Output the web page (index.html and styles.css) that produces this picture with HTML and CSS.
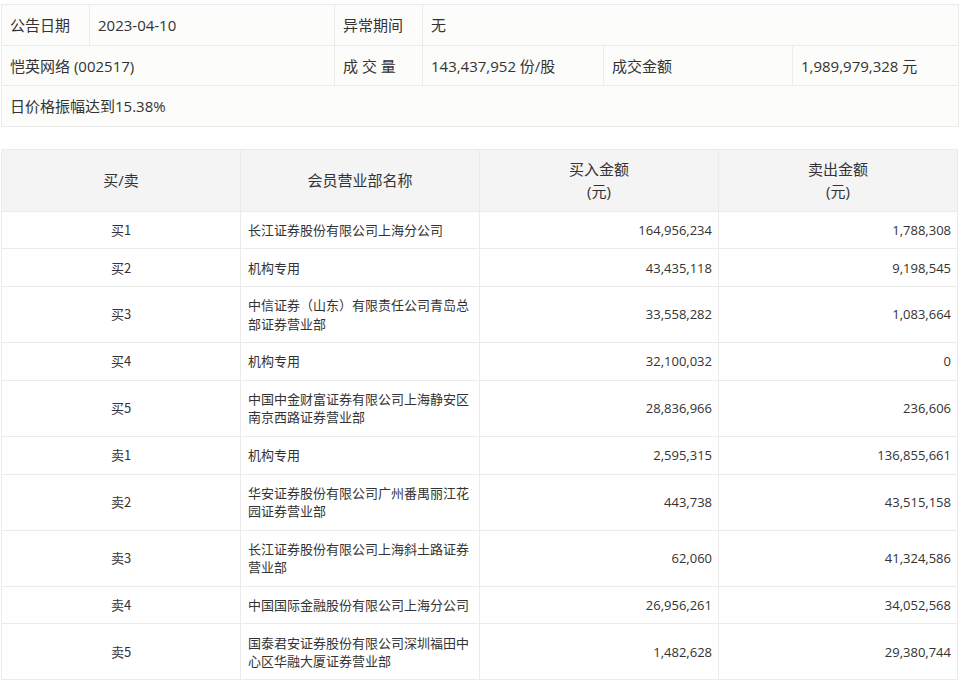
FILE: index.html
```html
<!DOCTYPE html>
<html lang="zh-CN">
<head>
<meta charset="utf-8">
<link rel="stylesheet" href="styles.css">
</head>
<body>
<div class="page">
  <table class="info">
    <colgroup>
      <col class="c1"><col class="c2"><col class="c3"><col class="c4"><col class="c5"><col class="c6">
    </colgroup>
    <tr>
      <td>公告日期</td>
      <td>2023-04-10</td>
      <td>异常期间</td>
      <td colspan="3">无</td>
    </tr>
    <tr>
      <td colspan="2">恺英网络 (002517)</td>
      <td>成 交 量</td>
      <td>143,437,952 份/股</td>
      <td>成交金额</td>
      <td>1,989,979,328 元</td>
    </tr>
    <tr>
      <td colspan="6">日价格振幅达到15.38%</td>
    </tr>
  </table>

  <table class="trades">
    <colgroup>
      <col class="q"><col class="q"><col class="q"><col class="q">
    </colgroup>
    <thead>
      <tr>
        <th>买/卖</th>
        <th>会员营业部名称</th>
        <th>买入金额<br>(元)</th>
        <th>卖出金额<br>(元)</th>
      </tr>
    </thead>
    <tbody>
      <tr><td class="side">买1</td><td class="name">长江证券股份有限公司上海分公司</td><td class="num">164,956,234</td><td class="num">1,788,308</td></tr>
      <tr><td class="side">买2</td><td class="name">机构专用</td><td class="num">43,435,118</td><td class="num">9,198,545</td></tr>
      <tr><td class="side">买3</td><td class="name">中信证券（山东）有限责任公司青岛总部证券营业部</td><td class="num">33,558,282</td><td class="num">1,083,664</td></tr>
      <tr><td class="side">买4</td><td class="name">机构专用</td><td class="num">32,100,032</td><td class="num">0</td></tr>
      <tr><td class="side">买5</td><td class="name">中国中金财富证券有限公司上海静安区南京西路证券营业部</td><td class="num">28,836,966</td><td class="num">236,606</td></tr>
      <tr><td class="side">卖1</td><td class="name">机构专用</td><td class="num">2,595,315</td><td class="num">136,855,661</td></tr>
      <tr><td class="side">卖2</td><td class="name">华安证券股份有限公司广州番禺丽江花园证券营业部</td><td class="num">443,738</td><td class="num">43,515,158</td></tr>
      <tr><td class="side">卖3</td><td class="name">长江证券股份有限公司上海斜土路证券营业部</td><td class="num">62,060</td><td class="num">41,324,586</td></tr>
      <tr><td class="side">卖4</td><td class="name">中国国际金融股份有限公司上海分公司</td><td class="num">26,956,261</td><td class="num">34,052,568</td></tr>
      <tr><td class="side">卖5</td><td class="name">国泰君安证券股份有限公司深圳福田中心区华融大厦证券营业部</td><td class="num">1,482,628</td><td class="num">29,380,744</td></tr>
    </tbody>
  </table>
</div>
</body>
</html>
```

FILE: styles.css
```css
html, body {
  margin: 0;
  padding: 0;
  background: #ffffff;
}

body {
  font-family: "Open Sans", "Noto Sans CJK SC", sans-serif;
  color: #333333;
}

.page {
  padding: 4px 0 0 1px;
}

table {
  border-collapse: collapse;
  table-layout: fixed;
  width: 957px;
}

.info {
  background: #fcfcfa;
  font-size: 15px;
}

.info td {
  border: 1px solid #ebebeb;
  height: 40.5px;
  padding: 0 8px;
  box-sizing: border-box;
  white-space: nowrap;
  vertical-align: middle;
}

.info .c1 { width: 88px; }
.info .c2 { width: 245px; }
.info .c3 { width: 88px; }
.info .c4 { width: 181px; }
.info .c5 { width: 189px; }
.info .c6 { width: 166px; }

.trades {
  margin-top: 22px;
  font-size: 13px;
}

.trades .q { width: 239px; }

.trades th {
  background: #f4f4f4;
  border: 1px solid #ebebeb;
  font-weight: normal;
  font-size: 15px;
  line-height: 22px;
  height: 62px;
  padding: 0 6px;
  box-sizing: border-box;
  text-align: center;
  vertical-align: middle;
}

.trades td {
  border: 1px solid #ebebeb;
  line-height: 18.2px;
  padding: 9.3px 6px;
  vertical-align: middle;
}

.trades .side {
  text-align: center;
  font-family: "Noto Sans CJK SC", sans-serif;
}

.trades .name {
  text-align: left;
  padding-left: 7px;
  font-family: "Noto Sans CJK SC", sans-serif;
}

.trades .num { text-align: right; }
```
